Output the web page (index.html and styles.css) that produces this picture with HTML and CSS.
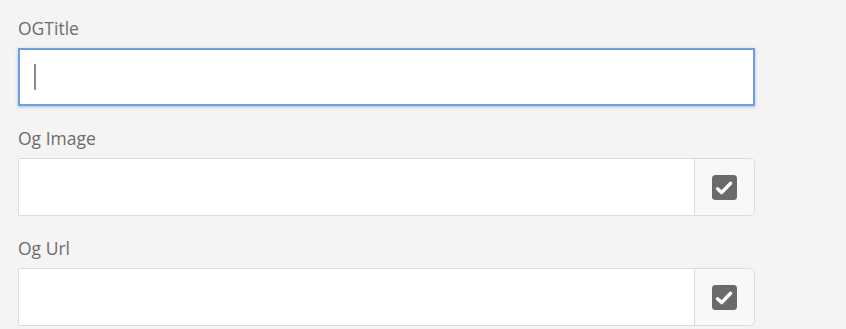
FILE: index.html
```html
<!DOCTYPE html>
<html>
<head>
<meta charset="utf-8">
<link rel="stylesheet" href="styles.css">
</head>
<body>
<div class="form">
  <div class="field">
    <label class="label">OGTitle</label>
    <div class="input focused"><span class="caret"></span></div>
  </div>
  <div class="field">
    <label class="label">Og Image</label>
    <div class="group">
      <div class="input plain"></div>
      <div class="addon">
        <svg width="25" height="25" viewBox="0 0 25 25"><rect x="0" y="0" width="25" height="25" rx="3.5" fill="#6a6a6a"/><path d="M5.5 13.8 L9.6 17.6 L18.6 8.2" fill="none" stroke="#fff" stroke-width="3.4" stroke-linecap="round" stroke-linejoin="round"/></svg>
      </div>
    </div>
  </div>
  <div class="field">
    <label class="label">Og Url</label>
    <div class="group">
      <div class="input plain"></div>
      <div class="addon">
        <svg width="25" height="25" viewBox="0 0 25 25"><rect x="0" y="0" width="25" height="25" rx="3.5" fill="#6a6a6a"/><path d="M5.5 13.8 L9.6 17.6 L18.6 8.2" fill="none" stroke="#fff" stroke-width="3.4" stroke-linecap="round" stroke-linejoin="round"/></svg>
      </div>
    </div>
  </div>
</div>
</body>
</html>
```
FILE: styles.css
```css
html, body {
  margin: 0;
  padding: 0;
  background: #f4f4f4;
}
body {
  font-family: "Open Sans", "Noto Sans", sans-serif;
}
.form {
  width: 737px;
  padding: 16px 0 0 18px;
}
.field {
  margin-bottom: 20px;
}
.field:last-child {
  margin-bottom: 0;
}
.label {
  display: block;
  font-size: 17.5px;
  line-height: 24px;
  color: #6c6c6c;
  margin-bottom: 8px;
}
.input {
  box-sizing: border-box;
  height: 58px;
  background: #fff;
}
.focused {
  border: 2px solid #6f9de2;
  box-shadow: 0 1px 3px rgba(90, 140, 220, 0.5);
  display: flex;
  align-items: center;
  padding-left: 14px;
}
.caret {
  width: 2px;
  height: 26px;
  background: #8a8a8a;
}
.group {
  display: flex;
  height: 58px;
  box-sizing: border-box;
  border: 1px solid #dcdcdc;
  border-radius: 0 5px 5px 0;
  background: #fff;
}
.plain {
  flex: 1;
  height: auto;
}
.addon {
  width: 59px;
  border-left: 1px solid #dcdcdc;
  background: #f8f8f8;
  border-radius: 0 5px 5px 0;
  display: flex;
  align-items: center;
  justify-content: center;
}
.addon svg {
  display: block;
}
```
